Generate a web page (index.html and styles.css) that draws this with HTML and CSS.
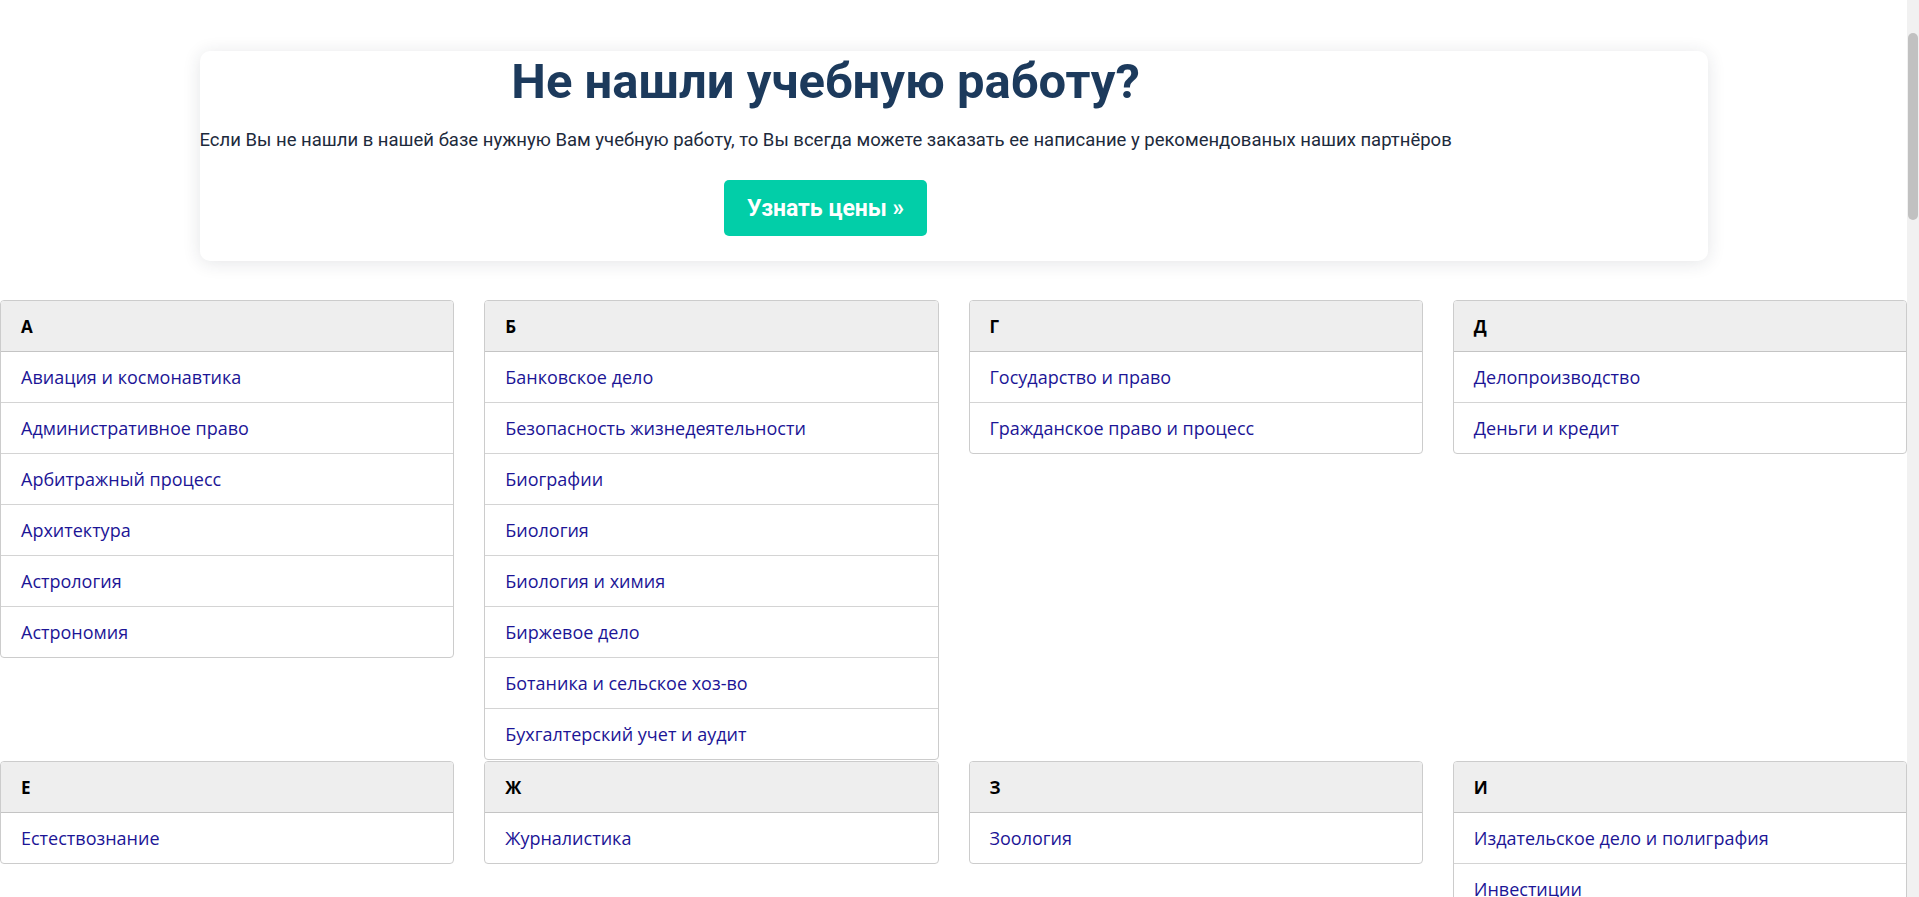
FILE: index.html
```html
<!DOCTYPE html>
<html lang="ru">
<head>
<meta charset="utf-8">
<title>Не нашли учебную работу?</title>
<link rel="stylesheet" href="styles.css">
</head>
<body>
<div class="page">
<section class="hero">
  <div class="hero-inner">
    <h2 class="hero-title">Не нашли учебную работу?</h2>
    <p class="hero-text">Если Вы не нашли в нашей базе нужную Вам учебную работу, то Вы всегда можете заказать ее написание у рекомендованых наших партнёров</p>
    <a class="hero-btn" href="#">Узнать цены »</a>
  </div>
</section>

<div class="grid">
  <div class="card"><div class="card-head">А</div>
    <a class="item" href="#">Авиация и космонавтика</a>
    <a class="item" href="#">Административное право</a>
    <a class="item" href="#">Арбитражный процесс</a>
    <a class="item" href="#">Архитектура</a>
    <a class="item" href="#">Астрология</a>
    <a class="item" href="#">Астрономия</a>
  </div>
  <div class="card"><div class="card-head">Б</div>
    <a class="item" href="#">Банковское дело</a>
    <a class="item" href="#">Безопасность жизнедеятельности</a>
    <a class="item" href="#">Биографии</a>
    <a class="item" href="#">Биология</a>
    <a class="item" href="#">Биология и химия</a>
    <a class="item" href="#">Биржевое дело</a>
    <a class="item" href="#">Ботаника и сельское хоз-во</a>
    <a class="item" href="#">Бухгалтерский учет и аудит</a>
  </div>
  <div class="card"><div class="card-head">Г</div>
    <a class="item" href="#">Государство и право</a>
    <a class="item" href="#">Гражданское право и процесс</a>
  </div>
  <div class="card"><div class="card-head">Д</div>
    <a class="item" href="#">Делопроизводство</a>
    <a class="item" href="#">Деньги и кредит</a>
  </div>

  <div class="card"><div class="card-head">Е</div>
    <a class="item" href="#">Естествознание</a>
  </div>
  <div class="card"><div class="card-head">Ж</div>
    <a class="item" href="#">Журналистика</a>
  </div>
  <div class="card"><div class="card-head">З</div>
    <a class="item" href="#">Зоология</a>
  </div>
  <div class="card"><div class="card-head">И</div>
    <a class="item" href="#">Издательское дело и полиграфия</a>
    <a class="item" href="#">Инвестиции</a>
    <a class="item" href="#">Иностранный язык</a>
    <a class="item" href="#">Информатика</a>
    <a class="item" href="#">Информатика, программирование</a>
    <a class="item" href="#">Исторические личности</a>
    <a class="item" href="#">История</a>
    <a class="item" href="#">История техники</a>
  </div>

  <div class="card"><div class="card-head">К</div>
    <a class="item" href="#">Кибернетика</a>
    <a class="item" href="#">Коммуникации и связь</a>
    <a class="item" href="#">Компьютерные науки</a>
    <a class="item" href="#">Косметология</a>
    <a class="item" href="#">Краеведение и этнография</a>
    <a class="item" href="#">Криминалистика</a>
    <a class="item" href="#">Криминология</a>
    <a class="item" href="#">Криптология</a>
    <a class="item" href="#">Кулинария</a>
    <a class="item" href="#">Культура и искусство</a>
    <a class="item" href="#">Культурология</a>
  </div>
  <div class="card"><div class="card-head">Л</div>
    <a class="item" href="#">Литература : зарубежная</a>
    <a class="item" href="#">Литература и русский язык</a>
    <a class="item" href="#">Логика</a>
    <a class="item" href="#">Логистика</a>
  </div>
  <div class="card"><div class="card-head">М</div>
    <a class="item" href="#">Маркетинг</a>
    <a class="item" href="#">Математика</a>
    <a class="item" href="#">Медицина, здоровье</a>
    <a class="item" href="#">Медицинские науки</a>
    <a class="item" href="#">Международное публичное право</a>
    <a class="item" href="#">Международное частное право</a>
    <a class="item" href="#">Международные отношения</a>
    <a class="item" href="#">Менеджмент</a>
    <a class="item" href="#">Металлургия</a>
    <a class="item" href="#">Москвоведение</a>
    <a class="item" href="#">Музыка</a>
    <a class="item" href="#">Муниципальное право</a>
  </div>
  <div class="card"><div class="card-head">Н</div>
    <a class="item" href="#">Налоги, налогообложение</a>
    <a class="item" href="#">Наука и техника</a>
    <a class="item" href="#">Начертательная геометрия</a>
  </div>

  <div class="card"><div class="card-head">О</div>
    <a class="item" href="#">Оккультизм и уфология</a>
    <a class="item" href="#">Остальные рефераты</a>
  </div>
  <div class="card"><div class="card-head">П</div>
    <a class="item" href="#">Педагогика</a>
    <a class="item" href="#">Политология</a>
    <a class="item" href="#">Право</a>
    <a class="item" href="#">Право, юриспруденция</a>
    <a class="item" href="#">Предпринимательство</a>
    <a class="item" href="#">Прикладные науки</a>
    <a class="item" href="#">Промышленность, производство</a>
    <a class="item" href="#">Психология</a>
    <a class="item" href="#">Психология, педагогика</a>
  </div>
  <div class="card"><div class="card-head">Р</div>
    <a class="item" href="#">Радиоэлектроника</a>
    <a class="item" href="#">Реклама</a>
    <a class="item" href="#">Религия и мифология</a>
    <a class="item" href="#">Риторика</a>
  </div>
  <div class="card"><div class="card-head">С</div>
    <a class="item" href="#">Сексология</a>
    <a class="item" href="#">Социология</a>
    <a class="item" href="#">Статистика</a>
    <a class="item" href="#">Страхование</a>
    <a class="item" href="#">Строительные науки</a>
    <a class="item" href="#">Строительство</a>
  </div>

  <div class="card"><div class="card-head">Т</div>
    <a class="item" href="#">Таможенная система</a>
    <a class="item" href="#">Теория государства и права</a>
    <a class="item" href="#">Теория организации</a>
    <a class="item" href="#">Теплотехника</a>
    <a class="item" href="#">Технология</a>
    <a class="item" href="#">Товароведение</a>
    <a class="item" href="#">Транспорт</a>
    <a class="item" href="#">Трудовое право</a>
    <a class="item" href="#">Туризм</a>
  </div>
  <div class="card"><div class="card-head">У</div>
    <a class="item" href="#">Уголовное право и процесс</a>
    <a class="item" href="#">Управление</a>
  </div>
  <div class="card"><div class="card-head">Ф</div>
    <a class="item" href="#">Физика</a>
    <a class="item" href="#">Физкультура и спорт</a>
    <a class="item" href="#">Философия</a>
    <a class="item" href="#">Финансовые науки</a>
    <a class="item" href="#">Финансы</a>
    <a class="item" href="#">Фотография</a>
  </div>
  <div class="card"><div class="card-head">Х</div>
    <a class="item" href="#">Химия</a>
    <a class="item" href="#">Хозяйственное право</a>
  </div>

  <div class="card"><div class="card-head">Ц</div>
    <a class="item" href="#">Цифровые устройства</a>
  </div>
  <div class="card"><div class="card-head">Э</div>
    <a class="item" href="#">Экологическое право</a>
    <a class="item" href="#">Экология</a>
    <a class="item" href="#">Экономика</a>
    <a class="item" href="#">Экономико-математическое моделирование</a>
    <a class="item" href="#">Экономическая география</a>
    <a class="item" href="#">Экономическая теория</a>
    <a class="item" href="#">Этика</a>
  </div>
  <div class="card"><div class="card-head">Ю</div>
    <a class="item" href="#">Юриспруденция</a>
  </div>
  <div class="card"><div class="card-head">Я</div>
    <a class="item" href="#">Языковедение</a>
    <a class="item" href="#">Языкознание, филология</a>
  </div>
</div>
</div>
<div class="scrollbar" aria-hidden="true"><div class="scrollbar-thumb"></div></div>
</body>
</html>
```

FILE: styles.css
```css
html, body {
  margin: 0;
  padding: 0;
  background: #ffffff;
}

body {
  font-family: "Open Sans", "Noto Sans", sans-serif;
  color: #222;
}

.page {
  margin-right: 12px;
}

/* browser scrollbar drawn over the right edge */
.scrollbar {
  position: fixed;
  top: 0;
  right: 0;
  width: 12px;
  height: 100vh;
  background: #f1f1f1;
}

.scrollbar-thumb {
  position: absolute;
  top: 33px;
  left: 1px;
  width: 10px;
  height: 187px;
  border-radius: 5px;
  background: #c1c1c1;
}

.hero {
  width: 1508px;
  margin: 51px auto 39px;
  background: #ffffff;
  border-radius: 10px;
  box-shadow: 0 2px 18px rgba(30, 40, 60, 0.12);
  min-height: 210px;
  box-sizing: border-box;
  display: flex;
}

.hero-inner {
  display: inline-flex;
  flex-direction: column;
  align-items: center;
}

.hero-title {
  margin: 0;
  font-family: Roboto, "Noto Sans", sans-serif;
  font-weight: 700;
  font-size: 49px;
  line-height: 62px;
  color: #1c3a5c;
  letter-spacing: 0;
}

.hero-text {
  margin: 14px 0 0;
  font-family: Roboto, "Noto Sans", sans-serif;
  font-size: 18.5px;
  line-height: 26px;
  color: #1d2a3c;
  white-space: nowrap;
}

.hero-btn {
  margin-top: 27px;
  display: flex;
  align-items: center;
  justify-content: center;
  width: 203px;
  height: 56px;
  border-radius: 5px;
  background: #02cea8;
  color: #ffffff;
  text-decoration: none;
  font-family: Roboto, "Noto Sans", sans-serif;
  font-weight: 700;
  font-size: 23px;
}

.grid {
  display: grid;
  grid-template-columns: repeat(4, 1fr);
  column-gap: 30px;
  row-gap: 1px;
  align-items: start;
}

.card {
  border: 1px solid #cccccc;
  border-radius: 4px;
  overflow: hidden;
  display: flex;
  flex-direction: column;
  background: #fff;
}

.card-head {
  height: 50px;
  display: flex;
  align-items: center;
  padding-left: 20px;
  background: #eeeeee;
  border-bottom: 1px solid #c4c4c4;
  font-weight: 700;
  font-size: 17px;
  color: #000;
}

.item {
  height: 50px;
  display: flex;
  align-items: center;
  padding-left: 20px;
  border-bottom: 1px solid #d4d4d4;
  color: #1c1596;
  text-decoration: none;
  font-size: 18px;
}

.item:last-child {
  border-bottom: 0;
}
```
